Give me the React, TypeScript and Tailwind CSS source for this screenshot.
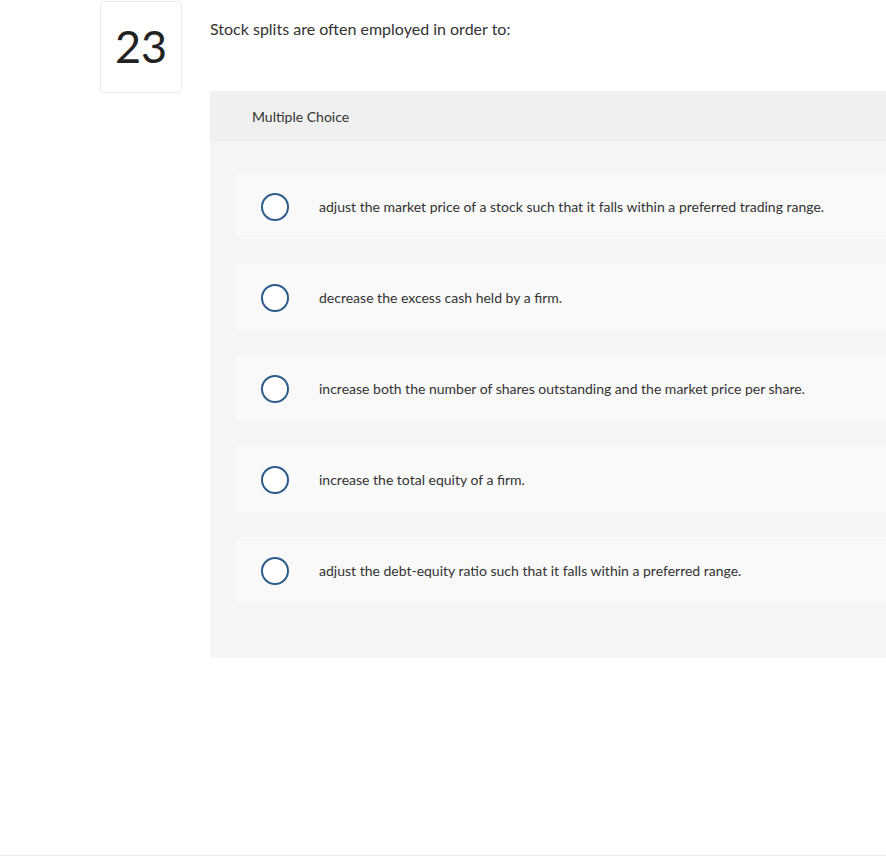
import React from "react";

const choices = [
  "adjust the market price of a stock such that it falls within a preferred trading range.",
  "decrease the excess cash held by a firm.",
  "increase both the number of shares outstanding and the market price per share.",
  "increase the total equity of a firm.",
  "adjust the debt-equity ratio such that it falls within a preferred range.",
];

export default function App() {
  return (
    <div
      className="relative w-[886px] h-[864px] overflow-hidden bg-white text-[#333]"
      style={{ fontFamily: "Lato, 'Open Sans', sans-serif" }}
    >
      <div className="flex pt-[1px]">
        <div className="ml-[100px] w-[82px] h-[92px] shrink-0 flex items-center justify-center rounded border border-[#eaeaea] text-[45px] font-normal text-[#222] leading-none pb-[2px]">
          23
        </div>
        <div className="ml-[28px] flex-1 min-w-0">
          <p className="mt-[18px] text-[16px] leading-5 text-[#333]">
            Stock splits are often employed in order to:
          </p>
          <div className="mt-[52px] -mr-4 bg-[#f5f5f5] pb-[55px]">
            <div className="h-[50px] bg-[#f0f0f0] flex items-center pl-[42px] text-[14px] text-[#333]">
              Multiple Choice
            </div>
            <div className="flex flex-col gap-[25px] pt-[32px] pl-[26px]">
              {choices.map((c) => (
                <div
                  key={c}
                  className="h-[66px] bg-[#f9f9f9] rounded flex items-center"
                >
                  <span className="ml-[25px] mt-[2px] w-[28px] h-[28px] rounded-full border-2 border-[#2b5c8c] bg-white shrink-0" />
                  <span className="ml-[30px] text-[14px] text-[#333]">{c}</span>
                </div>
              ))}
            </div>
          </div>
        </div>
      </div>
      <div className="absolute left-0 right-0 top-[855px] h-px bg-[#ececec]" />
    </div>
  );
}
